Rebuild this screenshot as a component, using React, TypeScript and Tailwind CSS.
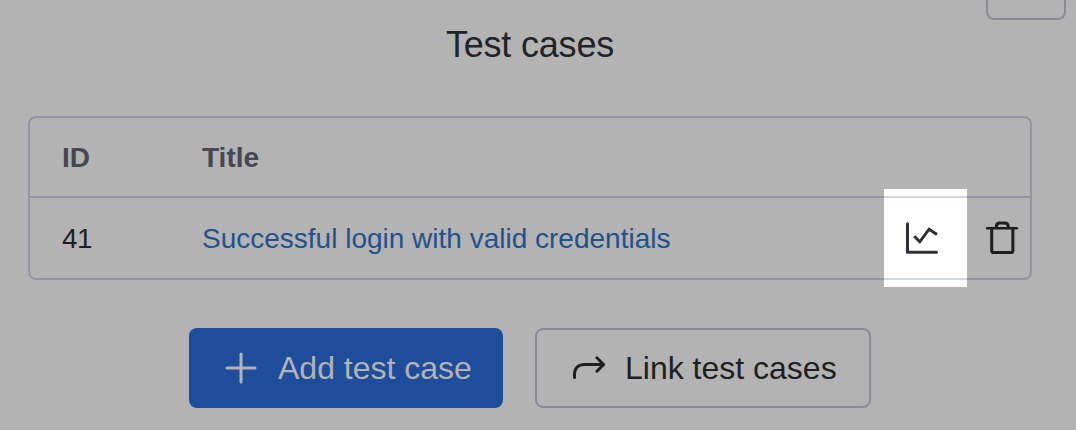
function ChartIcon() {
  return (
    <svg width="40" height="40" viewBox="0 0 40 40" fill="none" stroke="#2f3038" strokeWidth="3" strokeLinecap="round" strokeLinejoin="round">
      <path d="M5.5 5.8V34.3H34.5" />
      <path d="M12.2 18.2L17.8 23.8L27.1 11.2L35 16.6" strokeLinecap="butt" strokeLinejoin="miter" />
    </svg>
  );
}

function TrashIcon() {
  return (
    <svg width="40" height="40" viewBox="0 0 40 40" fill="none" stroke="#1e1f21" strokeWidth="3" strokeLinecap="round" strokeLinejoin="round">
      <path d="M5.2 10.2H34.8" strokeWidth="2.6" />
      <path d="M9.7 10.2V32.4C9.7 33.8 10.5 34.6 11.9 34.6H28.7C30.1 34.6 30.9 33.8 30.9 32.4V10.2" />
      <path d="M14.4 9.7V8.4C14.4 6.2 15.6 5 17.8 5H22.8C25 5 26.2 6.2 26.2 8.4V9.7" />
    </svg>
  );
}

function PlusIcon() {
  return (
    <svg width="40" height="40" viewBox="0 0 40 40" fill="none" stroke="#b3b3b3" strokeWidth="3" strokeLinecap="round">
      <path d="M20 6V34M6 20H34" />
    </svg>
  );
}

function ArrowIcon() {
  return (
    <svg width="40" height="40" viewBox="0 0 40 40" fill="none" stroke="#1e1f21" strokeWidth="3" strokeLinecap="round" strokeLinejoin="round">
      <path d="M5.5 29.6V26.5C5.5 20.2 9.2 16.5 15.5 16.5H34.3" />
      <path d="M27.9 9.8L34.6 16.5L27.9 23.2" />
    </svg>
  );
}

export default function App() {
  return (
    <div className="relative h-[430px] w-[1076px] overflow-hidden bg-[#b3b3b3] font-['Liberation_Sans',Arial,sans-serif] text-[#1e1f21]">
      <div className="flex h-5 justify-end pr-2.5">
        <button aria-label="More" className="h-5 w-20 rounded-b-lg border-2 border-t-0 border-[#8c8a98]" />
      </div>
      <h1 className="flex h-12 items-center justify-center pt-0.5 pr-4 text-[36px] tracking-[-0.2px] whitespace-nowrap text-[#222329]">
        Test cases
      </h1>
      <section className="mt-12 ml-7 h-[164px] w-[1004px] rounded-lg border-2 border-[#9294a2]">
        <div className="flex h-20 items-center border-b-2 border-[#9294a2] pt-0.5 pl-8 text-[28px] font-bold text-[#474753]">
          <span className="w-[140px]">ID</span>
          <span>Title</span>
        </div>
        <div className="flex h-20 items-center pl-8 text-[28px]">
          <span className="w-[140px] pt-0.5 tracking-[-0.5px]">41</span>
          <a className="pt-0.5 whitespace-nowrap text-[#23518b]">Successful login with valid credentials</a>
          <button aria-label="Delete" className="mr-2 ml-auto">
            <TrashIcon />
          </button>
        </div>
      </section>
      <div className="mt-12 ml-[189px] flex gap-8 text-[32px]">
        <button className="flex h-20 w-[314px] items-center rounded-lg bg-[#1e4d9c] pl-8 whitespace-nowrap text-[#b3b3b3]">
          <PlusIcon />
          <span className="ml-[17px]">Add test case</span>
        </button>
        <button className="flex h-20 w-[336px] items-center rounded-lg border-2 border-[#8c8a98] pl-8 whitespace-nowrap">
          <ArrowIcon />
          <span className="ml-4">Link test cases</span>
        </button>
      </div>
      <div className="absolute top-[189px] left-[884px] flex h-[98px] w-[83px] flex-col bg-white">
        <div className="mt-[7px] flex h-[84px] items-center border-y-2 border-[#d0d4e4] pl-[18px]">
          <ChartIcon />
        </div>
      </div>
    </div>
  );
}
